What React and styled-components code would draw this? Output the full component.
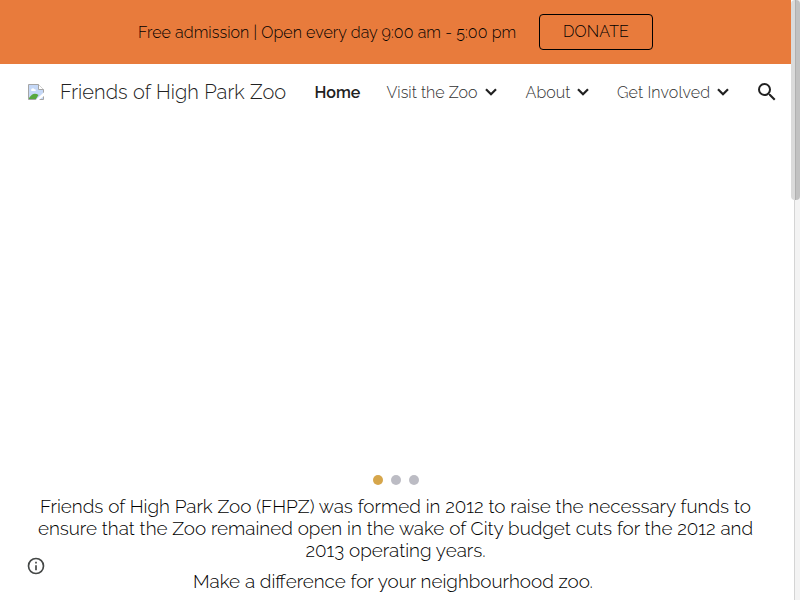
import React from "react";
import styled, { createGlobalStyle } from "styled-components";

const GlobalStyle = createGlobalStyle`
  * {
    box-sizing: border-box;
  }
  body {
    margin: 0;
    background: #fff;
    font-family: Raleway, Lato, "Open Sans", sans-serif;
    font-weight: 300;
    overflow: hidden;
  }
`;

const Page = styled.div`
  position: relative;
  width: 800px;
  height: 600px;
  display: flex;
  flex-direction: column;
  padding-right: 9px;
  overflow: hidden;
`;

const Banner = styled.div`
  flex: none;
  height: 64px;
  padding-left: 138px;
  display: flex;
  align-items: center;
  background: #e87b3c;
  color: #000;
`;
const BannerText = styled.span`
  width: 401px;
  padding-top: 2px;
  font-size: 16px;
  line-height: 24px;
  letter-spacing: 0.06px;
  white-space: nowrap;
`;
const DonateButton = styled.a`
  width: 114px;
  height: 36px;
  padding-bottom: 2px;
  display: flex;
  align-items: center;
  justify-content: center;
  border: 1px solid #000;
  border-radius: 4px;
  font-size: 16px;
  letter-spacing: 0.15px;
  white-space: nowrap;
`;

const Header = styled.header`
  flex: none;
  height: 56px;
  padding-left: 28px;
  display: flex;
  align-items: center;
`;
const Title = styled.span`
  width: 254.5px;
  margin-left: 16px;
  font-size: 20px;
  color: #212121;
  white-space: nowrap;
  letter-spacing: 0.09px;
`;
const NavItem = styled.a`
  width: ${(props) => props.$width}px;
  display: flex;
  align-items: center;
  color: ${(props) => (props.$active ? "#212121" : "#333")};
  font-size: 16px;
  font-weight: ${(props) => (props.$active ? 600 : 300)};
  white-space: nowrap;
`;
const NavLabel = styled.span`
  width: ${(props) => props.$width}px;
  letter-spacing: ${(props) => props.$spacing || 0}px;
`;

const Carousel = styled.div`
  flex: none;
  height: 375px;
  padding-bottom: 10px;
  padding-left: 1px;
  display: flex;
  align-items: flex-end;
  justify-content: center;
  gap: 8px;
`;
const Dot = styled.span`
  width: 10px;
  height: 10px;
  border-radius: 50%;
  background: ${(props) => (props.$active ? "#d6a64b" : "#bcbcc4")};
`;

const Intro = styled.p`
  margin: 0 0 9px;
  padding-right: ${(props) => props.$inset || 0}px;
  color: #000;
  font-size: 18.87px;
  line-height: 22px;
  text-align: center;
  white-space: nowrap;
`;
const Line = styled.span`
  display: block;
`;

const InfoButton = styled.div`
  position: absolute;
  left: 26px;
  top: 556px;
  width: 20px;
  height: 20px;
`;
const ScrollTrack = styled.div`
  position: absolute;
  top: 0;
  right: 0;
  width: 6px;
  height: 600px;
  background: #f3f3f3;
  border-left: 1px solid #d4d4d4;
`;
const ScrollThumb = styled.div`
  position: absolute;
  top: 0;
  right: 0;
  width: 9px;
  height: 200px;
  border-radius: 4px;
  background: linear-gradient(to right, #dadada 4px, #b0b0b0 4px, #b0b0b0 5px, #c1c1c1 5px);
`;

const Svg = styled.svg`
  display: block;
  flex: none;
`;

const BrokenImage = () => (
  <Svg width="16" height="16" viewBox="0 0 16 16">
    <path d="M.5.5h10l5 5v10H.5z" fill="#c5d8f7" stroke="#a5a5a5" />
    <path d="M3 6.5c0-2 2.5-3 3.4-1.2C8 5 8.5 7 7 7H4z" fill="#fff" />
    <path d="M1 15v-1C4 9.5 7 8.5 10.5 11L8 15z" fill="#57a83e" />
    <path d="M10.5.5v5h5" fill="#fff" stroke="#a5a5a5" />
    <path d="M16 8.2 7.5 16H11l5-4z" fill="#fff" />
  </Svg>
);

const Chevron = () => (
  <Svg width="12" height="8" viewBox="0 0 12 8">
    <path d="m1 1.2 5 5 5-5" fill="none" stroke="#212121" strokeWidth="2.2" />
  </Svg>
);

const SearchIcon = () => (
  <Svg width="24" height="24" viewBox="0 0 24 24" fill="#212121">
    <path d="M15.5 14h-.79l-.28-.27A6.47 6.47 0 0 0 16 9.5 6.5 6.5 0 1 0 9.5 16c1.61 0 3.09-.59 4.23-1.57l.27.28v.79l5 4.99L20.49 19zm-6 0C7.01 14 5 11.99 5 9.5S7.01 5 9.5 5 14 7.01 14 9.5 11.99 14 9.5 14z" />
  </Svg>
);

const InfoIcon = () => (
  <Svg width="20" height="20" viewBox="0 0 24 24" fill="#444746">
    <path d="M11 7h2v2h-2zm0 4h2v6h-2zm1-9a10 10 0 1 0 0 20 10 10 0 0 0 0-20zm0 18a8 8 0 1 1 0-16 8 8 0 0 1 0 16z" />
  </Svg>
);

const App = () => {
  return (
    <>
      <GlobalStyle />
      <Page>
        <Banner>
          <BannerText>Free admission | Open every day 9:00 am - 5:00 pm</BannerText>
          <DonateButton>DONATE</DonateButton>
        </Banner>
        <Header>
          <BrokenImage />
          <Title>Friends of High Park Zoo</Title>
          <NavItem $width={72} $active>Home</NavItem>
          <NavItem $width={139}>
            <NavLabel $width={98.5}>Visit the Zoo</NavLabel>
            <Chevron />
          </NavItem>
          <NavItem $width={91.5}>
            <NavLabel $width={51.5} $spacing={0.1}>About</NavLabel>
            <Chevron />
          </NavItem>
          <NavItem $width={138}>
            <NavLabel $width={100} $spacing={0.12}>Get Involved</NavLabel>
            <Chevron />
          </NavItem>
          <SearchIcon />
        </Header>
        <Carousel>
          <Dot $active />
          <Dot />
          <Dot />
        </Carousel>
        <Intro>
          <Line>Friends of High Park Zoo (FHPZ) was formed in 2012 to raise the necessary funds to</Line>
          <Line>ensure that the Zoo remained open in the wake of City budget cuts for the 2012 and</Line>
          <Line>2013 operating years.</Line>
        </Intro>
        <Intro $inset={5}>
          <Line>Make a difference for your neighbourhood zoo.</Line>
        </Intro>
        <InfoButton>
          <InfoIcon />
        </InfoButton>
        <ScrollTrack />
        <ScrollThumb />
      </Page>
    </>
  );
};

export default App;
